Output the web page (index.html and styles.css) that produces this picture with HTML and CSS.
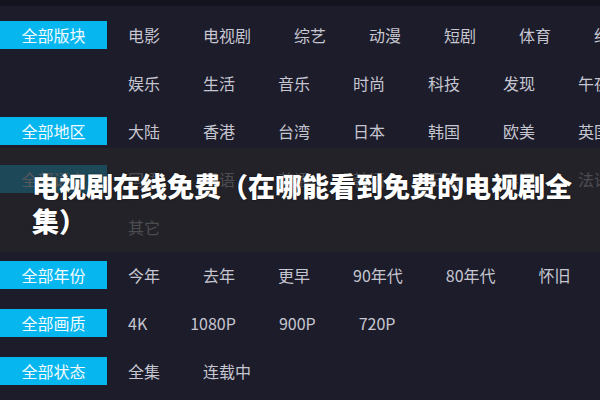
FILE: index.html
```html
<!DOCTYPE html>
<html lang="zh-CN">
<head>
<meta charset="utf-8">
<title>电视剧在线免费</title>
<link rel="stylesheet" href="styles.css">
</head>
<body>
<div class="page">
  <div class="topbar"></div>
  <div class="filters">
    <div class="group">
      <div class="label-col"><span class="label">全部版块</span></div>
      <div class="lines">
        <div class="line"><span>电影</span><span>电视剧</span><span>综艺</span><span>动漫</span><span>短剧</span><span>体育</span><span>纪录片</span></div>
        <div class="line"><span>娱乐</span><span>生活</span><span>音乐</span><span>时尚</span><span>科技</span><span>发现</span><span>午夜</span></div>
      </div>
    </div>
    <div class="group">
      <div class="label-col"><span class="label">全部地区</span></div>
      <div class="lines">
        <div class="line"><span>大陆</span><span>香港</span><span>台湾</span><span>日本</span><span>韩国</span><span>欧美</span><span>英国</span></div>
      </div>
    </div>
    <div class="group">
      <div class="label-col"><span class="label">全部语言</span></div>
      <div class="lines">
        <div class="line"><span>国语</span><span>粤语</span><span>英语</span><span>韩语</span><span>日语</span><span>泰语</span><span>法语</span></div>
        <div class="line"><span>其它</span></div>
      </div>
    </div>
    <div class="group">
      <div class="label-col"><span class="label">全部年份</span></div>
      <div class="lines">
        <div class="line"><span>今年</span><span>去年</span><span>更早</span><span>90年代</span><span>80年代</span><span>怀旧</span></div>
      </div>
    </div>
    <div class="group">
      <div class="label-col"><span class="label">全部画质</span></div>
      <div class="lines">
        <div class="line"><span>4K</span><span>1080P</span><span>900P</span><span>720P</span></div>
      </div>
    </div>
    <div class="group">
      <div class="label-col"><span class="label">全部状态</span></div>
      <div class="lines">
        <div class="line"><span>全集</span><span>连载中</span></div>
      </div>
    </div>
  </div>
  <div class="overlay">
    <h1 class="title">电视剧在线免费（在哪能看到免费的电视剧全集）</h1>
  </div>
</div>
</body>
</html>
```

FILE: styles.css
```css
* { box-sizing: border-box; margin: 0; padding: 0; }
html, body {
  width: 600px;
  height: 400px;
  overflow: hidden;
  background: #1c1c2b;
}
body {
  font-family: "Noto Sans CJK SC", "Noto Sans", sans-serif;
  color: #c6c6d0;
}
.page {
  position: relative;
  width: 600px;
  height: 400px;
  overflow: hidden;
}
.topbar {
  height: 6px;
  background: #14141f;
}
.filters {
  padding-top: 5px;
  display: flex;
  flex-direction: column;
}
.group {
  display: flex;
  gap: 21px;
}
.label-col {
  width: 107px;
  flex: none;
  height: 48px;
  display: flex;
  align-items: center;
}
.label {
  display: block;
  width: 107px;
  height: 28px;
  line-height: 28px;
  text-align: center;
  background: #06b7ef;
  color: #f2faff;
  font-size: 16px;
}
.lines {
  display: flex;
  flex-direction: column;
}
.line {
  height: 48px;
  display: flex;
  align-items: center;
  gap: 43px;
  white-space: nowrap;
  font-size: 16px;
}
.overlay {
  position: absolute;
  left: 0;
  top: 148px;
  width: 600px;
  height: 104px;
  background: rgba(37, 37, 40, 0.76);
  padding: 20px 0 0 32px;
}
.title {
  width: 545px;
  font-size: 27px;
  line-height: 35px;
  font-weight: 900;
  color: #ffffff;
  text-shadow: 0 0 2px rgba(0, 0, 0, 0.6);
}
```
